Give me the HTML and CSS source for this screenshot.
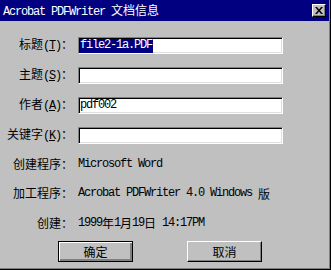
FILE: index.html
```html
<!DOCTYPE html>
<html lang="zh-CN">

<head>
    <meta charset="UTF-8">
    <title>Acrobat PDFWriter 文档信息</title>
    <link rel="stylesheet" href="styles.css">
</head>

<body>

    <div class="window">

        <!-- Barra de título -->
        <div class="titlebar">
            <span class="title"><span class="mono">Acrobat PDFWriter </span>文档信息</span>
            <span class="close">
                <svg width="8" height="7" viewBox="0 0 8 7">
                    <path d="M0 0h2l2 2.5 2-2.5h2l-3 3.5 3 3.5h-2l-2-2.5-2 2.5h-2l3-3.5z" fill="#000"/>
                </svg>
            </span>
        </div>

        <!-- Formulario -->
        <div class="form">
            <label class="label">标题<span class="mono">(<u>T</u>)</span>：</label>
            <div class="field"><span class="mono selected">file2-1a.PDF</span></div>

            <label class="label">主题<span class="mono">(<u>S</u>)</span>：</label>
            <div class="field"></div>

            <label class="label">作者<span class="mono">(<u>A</u>)</span>：</label>
            <div class="field"><span class="mono">pdf002</span></div>

            <label class="label">关键字<span class="mono">(<u>K</u>)</span>：</label>
            <div class="field"></div>

            <div class="label info">创建程序：</div>
            <div class="value info"><span class="mono">Microsoft Word</span></div>

            <div class="label info">加工程序：</div>
            <div class="value info"><span class="mono">Acrobat PDFWriter 4.0 Windows </span>版</div>

            <div class="label info">创建：</div>
            <div class="value info"><span class="mono">1999</span>年<span class="mono">1</span>月<span class="mono">19</span>日<span class="mono"> 14:17PM</span></div>
        </div>

        <!-- Botones -->
        <div class="buttons">
            <div class="btn btn-default"><span>确定</span></div>
            <div class="btn"><span>取消</span></div>
        </div>

    </div>

</body>
</html>
```

FILE: styles.css
```css
:root {
    --face:   #c0c0c0;
    --shadow: #808080;
    --light:  #dfdfdf;
    --navy:   #000080;
}

* {
    box-sizing: border-box;
    margin: 0;
    padding: 0;
}

body {
    background: var(--face);
    font-family: 'Noto Sans CJK SC', sans-serif;
    font-size: 12px;
    color: #000;
}

.mono {
    font-family: 'Liberation Mono', 'Noto Sans CJK SC', monospace;
    font-size: 12px;
    letter-spacing: -1.2px;
}

/* ── Ventana ── */
.window {
    width: 331px;
    height: 270px;
    background: var(--face);
    border-right: 1px solid #000;
    border-bottom: 1px solid #000;
    box-shadow: inset -1px -1px 0 var(--shadow);
}

.titlebar {
    height: 21px;
    margin-right: 1px;
    background: var(--navy);
    color: #fff;
    display: flex;
    align-items: center;
    justify-content: space-between;
    padding: 0 3px 0 3px;
}

.title {
    line-height: 14px;
    white-space: pre;
}

.close {
    width: 14px;
    height: 13px;
    background: var(--face);
    border-top: 1px solid #fff;
    border-left: 1px solid #fff;
    border-right: 1px solid #000;
    border-bottom: 1px solid #000;
    box-shadow: inset -1px -1px 0 var(--shadow);
    display: flex;
    align-items: center;
    justify-content: center;
    padding-bottom: 1px;
}

/* ── Formulario ── */
.form {
    display: grid;
    grid-template-columns: 73px 205px;
    grid-auto-rows: 30px;
    column-gap: 5px;
    align-items: center;
    padding-top: 9px;
}

.label {
    text-align: right;
    white-space: nowrap;
    line-height: 14px;
}

.label u {
    text-decoration-thickness: 1px;
    text-underline-offset: 1px;
}

.info {
    height: 29px;
    display: flex;
    align-items: center;
    white-space: pre;
}

.label.info {
    justify-content: flex-end;
}

.form .info:nth-child(9),
.form .info:nth-child(10) {
    margin-top: -3px;
}

.form .info:nth-child(11),
.form .info:nth-child(12) {
    margin-top: -4px;
}

.form .info:nth-child(13),
.form .info:nth-child(14) {
    margin-top: -5px;
}

.field {
    height: 17px;
    background: #fff;
    border-top: 1px solid var(--shadow);
    border-left: 1px solid var(--shadow);
    border-right: 1px solid #fff;
    border-bottom: 1px solid #fff;
    box-shadow: inset 1px 1px 0 #000, inset -1px -1px 0 var(--light);
    padding: 1px 1px 0 1px;
    line-height: 13px;
    display: flex;
}

.selected {
    background: var(--navy);
    color: #fff;
    line-height: 13px;
    padding-right: 1px;
}

/* ── Botones ── */
.buttons {
    display: flex;
    gap: 54px;
    padding: 0 0 0 58px;
    margin-top: 1px;
}

.btn {
    width: 75px;
    height: 21px;
    background: var(--face);
    border-top: 1px solid #fff;
    border-left: 1px solid #fff;
    border-right: 1px solid #000;
    border-bottom: 1px solid #000;
    box-shadow: inset -1px -1px 0 var(--shadow);
    display: flex;
    align-items: center;
    justify-content: center;
    font-size: 12px;
    line-height: 14px;
}

.btn-default {
    border: 1px solid #000;
    box-shadow: inset 1px 1px 0 #fff, inset -2px -2px 0 var(--shadow);
}
```
